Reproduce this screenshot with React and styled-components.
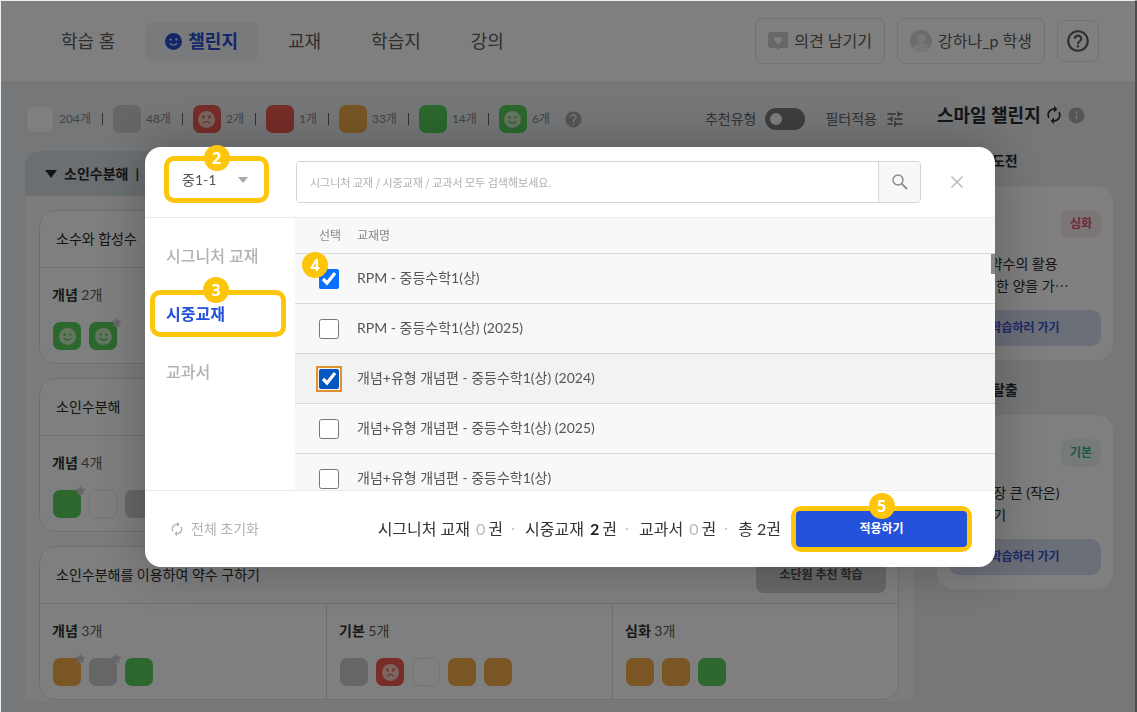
import React from "react";
import styled, { createGlobalStyle, css } from "styled-components";
import { MdAutorenew, MdTune, MdHelp, MdInfo, MdHelpOutline } from "react-icons/md";

const GlobalStyle = createGlobalStyle`
  * { box-sizing: border-box; }
  body {
    margin: 0;
    background: #ebeef1;
    color: #2a2a2a;
    font-family: Lato, "Noto Sans CJK KR", sans-serif;
    font-size: 14px;
    line-height: 20px;
  }
  button, input, select { font: inherit; color: inherit; }
  button { cursor: pointer; }
  h2, h3, p, ul { margin: 0; padding: 0; font-size: inherit; font-weight: inherit; }
  ul { list-style: none; }
`;

const Page = styled.div`
  min-height: 100vh;
  padding: 1px 0 0 1px;
  border-right: 2px solid #999;
  background: #ebeef1;
`;

/* ---------- top bar ---------- */

const TopBar = styled.header`
  display: flex;
  align-items: center;
  justify-content: space-between;
  height: 80px;
  padding: 0 36px 0 40px;
  background: #fff;
`;

const Nav = styled.nav`
  display: flex;
  gap: 10px;
`;

const NavLink = styled.a`
  display: flex;
  align-items: center;
  gap: 6px;
  height: 38px;
  padding: 0 20px;
  border-radius: 6px;
  font-size: 18px;
  color: #5c5c5c;
  text-decoration: none;
  ${(p) => p.$active && css`
    background: #f1f5f8;
    color: #2a4fd0;
    font-weight: 700;
  `}
`;

const Actions = styled.div`
  display: flex;
  align-items: center;
  gap: 12px;
`;

const OutlineButton = styled.button`
  display: flex;
  align-items: center;
  justify-content: center;
  gap: 6px;
  height: ${(p) => (p.$square ? 42 : 46)}px;
  width: ${(p) => (p.$square ? "42px" : "auto")};
  padding: ${(p) => (p.$square ? 0 : "0 12px")};
  border: 1px solid #e2e2e2;
  border-radius: 8px;
  background: #fff;
  font-size: 16px;
  color: #5c5c5c;
`;

/* ---------- page columns ---------- */

const Columns = styled.main`
  display: flex;
  align-items: flex-start;
  gap: 24px;
  padding: 20px 22px 0 24px;
`;

const Content = styled.section`
  flex: 1;
  min-width: 0;
`;

const Toolbar = styled.div`
  display: flex;
  align-items: center;
  justify-content: space-between;
  height: 36px;
  padding: 0 8px 0 1px;
`;

const Legend = styled.ul`
  display: flex;
  align-items: center;
`;

const LegendItem = styled.li`
  display: flex;
  align-items: center;
  gap: 5px;
  font-size: 12px;
  color: #888;
  & + &::before {
    content: "";
    width: 1px;
    height: 12px;
    margin: 0 5px 0 11px;
    background: #666;
  }
`;

const ToolbarTools = styled.div`
  display: flex;
  align-items: center;
  color: #666;
`;

const SwitchLabel = styled.label`
  display: flex;
  align-items: center;
  gap: 9px;
`;

const Switch = styled.input`
  appearance: none;
  display: flex;
  align-items: center;
  width: 40px;
  height: 22px;
  margin: 0;
  padding: 0 5px;
  border-radius: 11px;
  background: #7c7c7c;
  &::before {
    content: "";
    width: 12px;
    height: 12px;
    border-radius: 50%;
    background: #fff;
  }
`;

const TextButton = styled.button`
  display: flex;
  align-items: center;
  gap: ${(p) => p.$gap || 8}px;
  padding: 0;
  border: 0;
  background: none;
  color: ${(p) => p.$color || "inherit"};
  margin-left: ${(p) => p.$indent || 0}px;
`;

const HelpMark = styled.span`
  display: flex;
  margin-left: 14px;
  color: #aaa;
`;

const tileColors = {
  blank: "#fff",
  gray: "#cdcdcd",
  sad: "#f05a50",
  red: "#f05a50",
  orange: "#f2ac48",
  green: "#58d05a",
  smile: "#58d05a",
};

const TileBox = styled.span`
  position: relative;
  display: flex;
  align-items: center;
  justify-content: center;
  flex: none;
  width: 28px;
  height: 28px;
  border-radius: 7px;
  background: ${(p) => tileColors[p.$kind]};
  border: ${(p) => (p.$kind === "blank" ? "1px solid #e6e6e6" : "0")};
`;

const Star = styled.svg`
  position: absolute;
  top: -5px;
  right: -5px;
  width: 11px;
  height: 11px;
  fill: #cfcfd4;
`;

/* ---------- unit panel ---------- */

const Panel = styled.div`
  margin-top: 14px;
`;

const PanelHead = styled.h2`
  display: flex;
  align-items: center;
  gap: 7px;
  height: 45px;
  padding: 0 20px;
  border-radius: 16px 16px 0 0;
  background: #d6dfe5;
  font-weight: 700;
`;

const PanelBody = styled.div`
  display: flex;
  flex-direction: column;
  gap: 14px;
  padding: 14px 14px 1px;
  background: #f9f9f9;
`;

const Card = styled.article`
  border: 1px solid #dedede;
  border-radius: 16px;
  background: #fff;
`;

const CardHead = styled.div`
  display: flex;
  align-items: center;
  justify-content: space-between;
  height: 57px;
  padding: 0 12px 0 16px;
  border-bottom: 1px solid #dedede;
`;

const StudyButton = styled.button`
  width: 130px;
  height: 36px;
  padding: 0;
  border: 0;
  border-radius: 8px;
  background: #d0d0d0;
  font-size: 12px;
  font-weight: 700;
  color: #4c4c4c;
`;

const Levels = styled.div`
  display: grid;
  grid-template-columns: repeat(3, 1fr);
`;

const Level = styled.div`
  padding: 17px 12px 13px;
  & + & { border-left: 1px solid #dedede; }
`;

const LevelTitle = styled.h3`
  color: #5c5c5c;
  b { color: #333; }
`;

const Tiles = styled.div`
  display: flex;
  gap: 8px;
  margin-top: 17px;
  padding-left: 1px;
`;

/* ---------- challenge column ---------- */

const Aside = styled.aside`
  width: 176px;
`;

const AsideTitle = styled.h2`
  display: flex;
  align-items: center;
  gap: 3px;
  height: 28px;
  margin-bottom: 18px;
  font-size: 18px;
  font-weight: 700;
  white-space: nowrap;
`;

const AsideSection = styled.section`
  & + & { margin-top: 16px; }
`;

const SectionTitle = styled.h3`
  margin-bottom: 11px;
  line-height: 28px;
  font-weight: 700;
`;

const ChallengeCard = styled.div`
  display: flex;
  flex-direction: column;
  padding: 24px 12px 14px;
  border-radius: 16px;
  background: #fff;
`;

const LevelBadge = styled.span`
  align-self: flex-end;
  padding: 4px 9px;
  border-radius: 8px;
  font-size: 12px;
  font-weight: 700;
  color: ${(p) => p.$color};
  background: ${(p) => p.$bg};
`;

const ChallengeText = styled.p`
  margin: 15px 0 13px 2px;
  line-height: 22px;
  white-space: nowrap;
`;

const GoButton = styled.button`
  height: 36px;
  padding: 0;
  border: 0;
  border-radius: 10px;
  background: #d5dcee;
  font-size: 12px;
  font-weight: 700;
  color: #3a52cc;
`;

/* ---------- dialog ---------- */

const Backdrop = styled.div`
  position: fixed;
  inset: 1px 0 0 1px;
  display: flex;
  align-items: center;
  justify-content: center;
  padding: 1px 0 0 2px;
  background: rgba(0, 0, 0, 0.5);
`;

const Dialog = styled.div`
  display: flex;
  flex-direction: column;
  width: 850px;
  max-width: 100%;
  height: 420px;
  border-radius: 16px;
  background: #fff;
  box-shadow: 0 0 48px 8px rgba(0, 0, 0, 0.2);
`;

const DialogHead = styled.div`
  display: flex;
  align-items: center;
  height: 71px;
  padding: 0 27px 0 19px;
  border-bottom: 1px solid #ebebeb;
`;

const DialogBody = styled.div`
  display: flex;
  flex: 1;
  min-height: 0;
`;

const DialogFoot = styled.div`
  display: flex;
  align-items: center;
  height: 77px;
  padding: 0 23px 0 24px;
  border-top: 1px solid #ebebeb;
`;

const Marked = styled.div`
  position: relative;
  display: ${(p) => (p.$block ? "block" : "flex")};
  border: 5px solid #fdc60b;
  border-radius: 10px;
  margin: ${(p) => p.$margin || 0};
`;

const Step = styled.span`
  position: absolute;
  z-index: 1;
  top: ${(p) => p.$top}px;
  left: ${(p) => p.$left};
  width: 26px;
  height: 26px;
  margin-left: -13px;
  border-radius: 50%;
  background: #fdc60b;
  color: #fff;
  font-family: "Noto Sans", sans-serif;
  font-size: 16px;
  font-weight: 700;
  line-height: 26px;
  text-align: center;
`;

const SelectWrap = styled.label`
  display: flex;
  align-items: center;
  padding-right: 16px;
  color: #aaa;
`;

const GradeSelect = styled.select`
  appearance: none;
  width: 69px;
  height: 37px;
  padding: 0 0 0 13px;
  border: 0;
  background: transparent;
  color: #555;
  outline: 0;
`;

const SearchBox = styled.form`
  display: flex;
  flex: 1;
  height: 42px;
  margin: 0 25px 0 27px;
  border: 1px solid #d5d5d5;
  border-radius: 4px;
  overflow: hidden;
`;

const SearchInput = styled.input`
  flex: 1;
  min-width: 0;
  padding: 0 13px;
  border: 0;
  outline: 0;
  font-family: "Noto Sans CJK KR", sans-serif;
  font-size: 11px;
  &::placeholder { color: #b0b0b0; }
`;

const IconButton = styled.button`
  display: flex;
  align-items: center;
  justify-content: center;
  width: ${(p) => p.$size}px;
  padding: 0;
  border: 0;
  background: none;
  color: #b4b4b4;
`;

const SearchButton = styled(IconButton)`
  border-left: 1px solid #d5d5d5;
  background: #f8f8f8;
  color: #888;
`;

const Tabs = styled.div`
  display: flex;
  flex-direction: column;
  gap: 11px;
  width: 150px;
  padding: 14px 9px 0 5px;
`;

const Tab = styled.button`
  display: block;
  width: 100%;
  height: ${(p) => (p.$active ? 37 : 47)}px;
  padding: 0 0 0 ${(p) => (p.$active ? 11 : 16)}px;
  border: 0;
  background: none;
  font-size: 16px;
  font-weight: ${(p) => (p.$active ? 700 : 500)};
  text-align: left;
  color: ${(p) => (p.$active ? "#2350dc" : "#b2b2b2")};
`;

const ListArea = styled.div`
  position: relative;
  flex: 1;
  min-width: 0;
  overflow: hidden;
  background: #f8f8f8;
`;

const ScrollThumb = styled.span`
  position: absolute;
  top: 36px;
  right: 0;
  width: 4px;
  height: 20px;
  background: #8a8a8a;
`;

const BookTable = styled.table`
  width: 100%;
  table-layout: fixed;
  border-collapse: separate;
  border-spacing: 0;
  text-align: left;
  th {
    height: 36px;
    padding: 0;
    border-bottom: 1px solid #d8d8d8;
    font-size: 12px;
    font-weight: 400;
    color: #888;
  }
  th:first-child, td:first-child {
    width: 62px;
    padding-left: 24px;
  }
`;

const BookRow = styled.tr`
  background: ${(p) => (p.$hover ? "#f2f2f2" : "transparent")};
  td {
    position: relative;
    height: 50px;
    padding: 0;
    border-bottom: 1px solid #d8d8d8;
  }
`;

const BookName = styled.label`
  display: block;
  padding-bottom: 2px;
  color: #555;
`;

const Check = styled.input`
  display: block;
  width: 20px;
  height: 20px;
  margin: 0;
  accent-color: ${(p) => (p.$focus ? "#0557be" : "#0a70ff")};
  ${(p) => p.$focus && css`
    outline: 2px solid #e0902c;
    outline-offset: 1px;
    border-radius: 2px;
  `}
`;

const Summary = styled.div`
  display: flex;
  align-items: center;
  margin-left: auto;
  margin-right: 10px;
  font-size: 16px;
  color: #333;
`;

const Count = styled.span`
  margin: 0 3px 0 6px;
  color: ${(p) => (p.$on ? "#222" : "#bbb")};
  font-weight: ${(p) => (p.$on ? 700 : 400)};
`;

const Dot = styled.span`
  width: 2px;
  height: 2px;
  margin: 0 11px 0 9px;
  border-radius: 50%;
  background: #bbb;
`;

const ApplyButton = styled.button`
  width: 171px;
  height: 36px;
  padding: 0;
  border: 0;
  border-radius: 4px;
  background: #2452da;
  color: #fff;
  font-size: 12px;
  font-weight: 700;
`;

function Face({ size = 16, fill, ink, sad }) {
  return (
    <svg width={size} height={size} viewBox="0 0 18 18" aria-hidden="true">
      <circle cx="9" cy="9" r="9" fill={fill} />
      <circle cx="6" cy="7" r="1.1" fill={ink} />
      <circle cx="12" cy="7" r="1.1" fill={ink} />
      <path
        d={sad ? "M6 13c1.300-2.400 4.700-2.400 6 0M4.800 5l1.800.8M13.200 5l-1.800.8" : "M5.500 11c1.300 2.300 5.700 2.300 7 0"}
        fill="none" stroke={ink} strokeWidth="1.1" strokeLinecap="round"
      />
    </svg>
  );
}

function Tile({ kind, star }) {
  return (
    <TileBox $kind={kind}>
      {kind === "smile" && <Face size={17} fill="#c8ecc0" ink="#47b44a" />}
      {kind === "sad" && <Face size={17} fill="#f8cbc4" ink="#e0544a" sad />}
      {star && (
        <Star viewBox="0 0 12 12" aria-hidden="true">
          <path d="M6 0l1.700 3.800 4.300.5-3.200 2.900.9 4.300L6 9.400l-3.700 2.100.9-4.300L0 4.300l4.300-.5z" />
        </Star>
      )}
    </TileBox>
  );
}

function Caret({ width = 12, height = 7 }) {
  return (
    <svg width={width} height={height} viewBox="0 0 12 7" preserveAspectRatio="none" aria-hidden="true">
      <path d="M0 0h12L6 7z" fill="currentColor" />
    </svg>
  );
}

function SearchIcon() {
  return (
    <svg width="16" height="16" viewBox="0 0 16 16" fill="none" stroke="currentColor" aria-hidden="true">
      <circle cx="6" cy="6" r="5" strokeWidth="1.4" />
      <path d="M9.600 9.600L15 15" strokeWidth="1.800" />
    </svg>
  );
}

function CloseIcon() {
  return (
    <svg width="12" height="12" viewBox="0 0 12 12" fill="none" stroke="currentColor" aria-hidden="true">
      <path d="M.5.5l11 11M11.500.5l-11 11" strokeWidth="1.300" />
    </svg>
  );
}

function FeedbackIcon() {
  return (
    <svg width="20" height="20" viewBox="0 0 20 20" aria-hidden="true">
      <path d="M2.500 1h15A2.500 2.500 0 0 1 20 3.500v11a2.500 2.500 0 0 1-2.500 2.500H12l-2 2.500L8 17H2.500A2.500 2.500 0 0 1 0 14.500v-11A2.500 2.500 0 0 1 2.500 1z" fill="#d0d0d0" />
      <path d="M10 13.500L6.600 9.900a2.300 2.300 0 0 1 3.400-3.100 2.300 2.300 0 0 1 3.400 3.100z" fill="#fff" />
    </svg>
  );
}

function AvatarIcon() {
  return (
    <svg width="22" height="22" viewBox="0 0 22 22" aria-hidden="true">
      <circle cx="11" cy="11" r="11" fill="#d8d8d8" />
      <circle cx="11" cy="8.500" r="4.500" fill="#eee" />
      <path d="M3 18.500c1-4 4-5.500 8-5.500s7 1.500 8 5.500a11 11 0 0 1-16 0z" fill="#eee" />
    </svg>
  );
}

const legend = [
  ["blank", 204], ["gray", 48], ["sad", 2], ["red", 1], ["orange", 33], ["green", 14], ["smile", 6],
];

const units = [
  {
    title: "소수와 합성수",
    levels: [["개념", 2, ["smile", "smile*"]]],
  },
  {
    title: "소인수분해",
    levels: [["개념", 4, ["green*", "blank", "gray", "gray"]]],
  },
  {
    title: "소인수분해를 이용하여 약수 구하기",
    levels: [
      ["개념", 3, ["orange*", "gray*", "green"]],
      ["기본", 5, ["gray", "sad", "blank", "orange", "orange"]],
      ["심화", 3, ["orange", "orange", "green"]],
    ],
  },
];

const challenges = [
  { title: "심화문제 도전", level: "심화", color: "#e0507a", bg: "#f6eaea", lines: ["최대공약수의 활용", "(1) 일정한 양을 가⋯"] },
  { title: "취약유형 탈출", level: "기본", color: "#3fae88", bg: "#edf6f3", lines: ["중에 가장 큰 (작은)", "수 구하기"] },
];

const books = [
  { name: "RPM - 중등수학1(상)", checked: true, step: 4 },
  { name: "RPM - 중등수학1(상) (2025)" },
  { name: "개념+유형 개념편 - 중등수학1(상) (2024)", checked: true, focus: true },
  { name: "개념+유형 개념편 - 중등수학1(상) (2025)" },
  { name: "개념+유형 개념편 - 중등수학1(상)" },
];

function Header() {
  return (
    <TopBar>
      <Nav>
        <NavLink href="#home">학습 홈</NavLink>
        <NavLink href="#challenge" $active>
          <Face size={17} fill="#2a4fd0" ink="#fff" /> 챌린지
        </NavLink>
        <NavLink href="#books">교재</NavLink>
        <NavLink href="#sheets">학습지</NavLink>
        <NavLink href="#lectures">강의</NavLink>
      </Nav>
      <Actions>
        <OutlineButton><FeedbackIcon /> 의견 남기기</OutlineButton>
        <OutlineButton><AvatarIcon /> 강하나_p 학생</OutlineButton>
        <OutlineButton $square aria-label="도움말"><MdHelpOutline size={26} /></OutlineButton>
      </Actions>
    </TopBar>
  );
}

function UnitCard({ unit }) {
  return (
    <Card>
      <CardHead>
        <span>{unit.title}</span>
        <StudyButton>소단원 추천 학습</StudyButton>
      </CardHead>
      <Levels>
        {unit.levels.map(([name, count, tiles]) => (
          <Level key={name}>
            <LevelTitle><b>{name}</b> {count}개</LevelTitle>
            <Tiles>
              {tiles.map((t, i) => <Tile key={i} kind={t.replace("*", "")} star={t.endsWith("*")} />)}
            </Tiles>
          </Level>
        ))}
      </Levels>
    </Card>
  );
}

function BookDialog() {
  return (
    <Backdrop>
      <Dialog role="dialog" aria-modal="true" aria-label="교재 선택">
        <DialogHead>
          <Marked $margin="0 0 5px 0">
            <Step $top={-16} $left="50%">2</Step>
            <SelectWrap>
              <GradeSelect aria-label="학년 학기" defaultValue="1">
                <option value="1">중1-1</option>
                <option value="2">중1-2</option>
              </GradeSelect>
              <Caret width={10} height={6} />
            </SelectWrap>
          </Marked>
          <SearchBox onSubmit={(e) => e.preventDefault()}>
            <SearchInput aria-label="교재 검색" placeholder="시그니처 교재 / 시중교재 / 교과서 모두 검색해보세요." />
            <SearchButton $size={42} aria-label="검색"><SearchIcon /></SearchButton>
          </SearchBox>
          <IconButton $size={22} type="button" aria-label="닫기"><CloseIcon /></IconButton>
        </DialogHead>
        <DialogBody>
          <Tabs>
            <Tab>시그니처 교재</Tab>
            <Marked $block>
              <Step $top={-18} $left="61px">3</Step>
              <Tab $active>시중교재</Tab>
            </Marked>
            <Tab>교과서</Tab>
          </Tabs>
          <ListArea>
            <BookTable>
              <thead>
                <tr><th>선택</th><th>교재명</th></tr>
              </thead>
              <tbody>
                {books.map((b, i) => (
                  <BookRow key={b.name} $hover={b.focus}>
                    <td>
                      <Check id={`book${i}`} type="checkbox" defaultChecked={b.checked} $focus={b.focus} />
                      {b.step && <Step $top={-2} $left="20px">{b.step}</Step>}
                    </td>
                    <td><BookName htmlFor={`book${i}`}>{b.name}</BookName></td>
                  </BookRow>
                ))}
              </tbody>
            </BookTable>
            <ScrollThumb />
          </ListArea>
        </DialogBody>
        <DialogFoot>
          <TextButton $color="#b2b2b2" $gap={6}><MdAutorenew size={16} /> 전체 초기화</TextButton>
          <Summary>
            시그니처 교재<Count>0</Count>권<Dot />
            시중교재<Count $on>2</Count>권<Dot />
            교과서<Count>0</Count>권<Dot />
            총 2권
          </Summary>
          <Marked>
            <Step $top={-18} $left="50%">5</Step>
            <ApplyButton>적용하기</ApplyButton>
          </Marked>
        </DialogFoot>
      </Dialog>
    </Backdrop>
  );
}

export default function App() {
  return (
    <Page>
      <GlobalStyle />
      <Header />
      <Columns>
        <Content>
          <Toolbar>
            <Legend>
              {legend.map(([kind, n]) => (
                <LegendItem key={kind}><Tile kind={kind} />{n}개</LegendItem>
              ))}
              <HelpMark as="li"><MdHelp size={19} /></HelpMark>
            </Legend>
            <ToolbarTools>
              <SwitchLabel>추천유형<Switch type="checkbox" /></SwitchLabel>
              <TextButton $indent={20}>필터적용 <MdTune size={20} /></TextButton>
            </ToolbarTools>
          </Toolbar>
          <Panel>
            <PanelHead>
              <Caret width={12} height={8} />
              <span>소인수분해</span>
              <span>|</span>
            </PanelHead>
            <PanelBody>
              {units.map((u) => <UnitCard key={u.title} unit={u} />)}
            </PanelBody>
          </Panel>
        </Content>
        <Aside>
          <AsideTitle>
            스마일 챌린지
            <MdAutorenew size={20} />
            <MdInfo size={19} color="#aaa" />
          </AsideTitle>
          {challenges.map((c) => (
            <AsideSection key={c.title}>
              <SectionTitle>{c.title}</SectionTitle>
              <ChallengeCard>
                <LevelBadge $color={c.color} $bg={c.bg}>{c.level}</LevelBadge>
                <ChallengeText>{c.lines[0]}<br />{c.lines[1]}</ChallengeText>
                <GoButton>학습하러 가기</GoButton>
              </ChallengeCard>
            </AsideSection>
          ))}
        </Aside>
      </Columns>
      <BookDialog />
    </Page>
  );
}
